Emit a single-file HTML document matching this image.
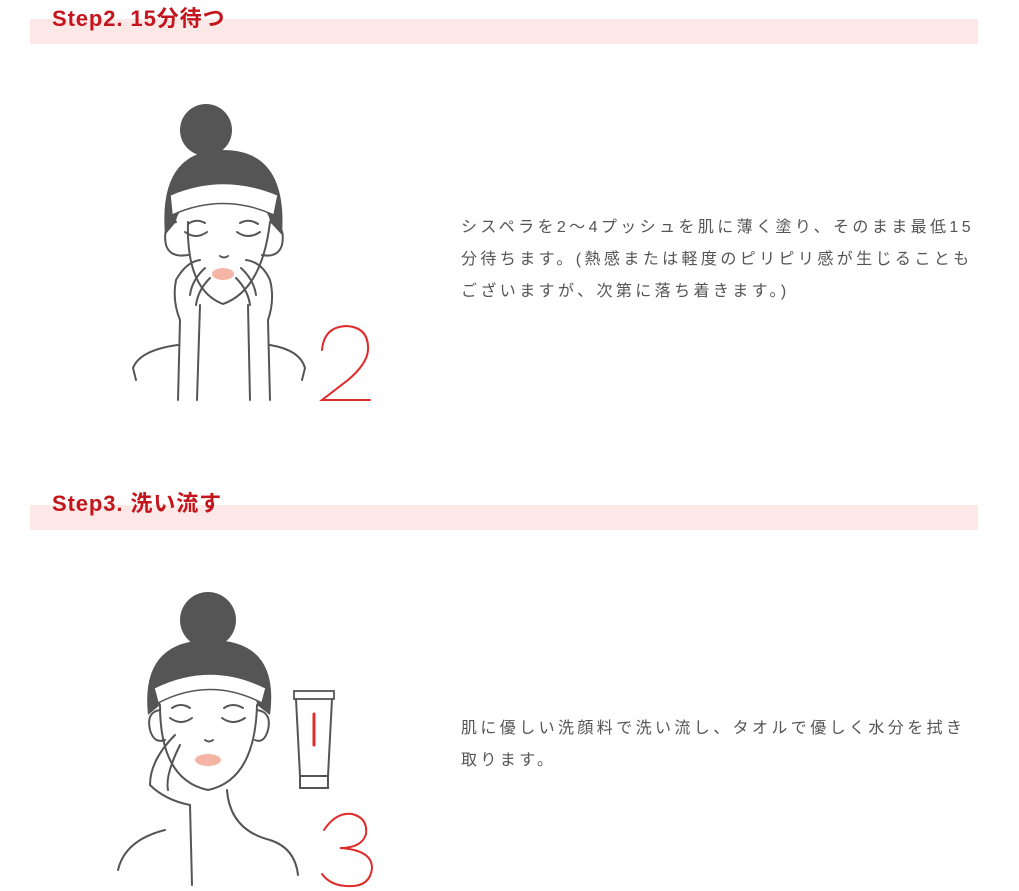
<!DOCTYPE html>
<html><head><meta charset="utf-8"><style>
html,body{margin:0;padding:0;background:#fff;}
body{width:1019px;height:891px;position:relative;overflow:hidden;font-family:"Liberation Sans","Noto Sans CJK JP",sans-serif;}
.bar{position:absolute;left:30px;width:948px;height:25px;background:#fde8e8;}
.ttl{position:absolute;left:52px;font-size:22px;letter-spacing:0.9px;font-weight:bold;color:#c4151c;line-height:26px;white-space:nowrap;}
.txt{position:absolute;left:461px;font-size:16px;letter-spacing:3.4px;color:#555;line-height:32px;white-space:nowrap;}
svg{position:absolute;left:0;top:0;}
</style></head><body>
<div class="bar" style="top:19px"></div>
<div class="ttl" style="top:6px">Step2. 15分待つ</div>
<div class="bar" style="top:505px"></div>
<div class="ttl" style="top:491px">Step3. 洗い流す</div>
<div class="txt" style="top:212px">シスペラを2～4プッシュを肌に薄く塗り、そのまま最低15<br>分待ちます。(熱感または軽度のピリピリ感が生じることも<br>ございますが、次第に落ち着きます。)</div>
<div class="txt" style="top:713px">肌に優しい洗顔料で洗い流し、タオルで優しく水分を拭き<br>取ります。</div>
<svg width="1019" height="891" viewBox="0 0 1019 891" fill="none" stroke="#555" stroke-width="2" stroke-linecap="round">
<circle cx="206" cy="130" r="26" fill="#555" stroke="none"/>
<path d="M165 235 Q158 150 223 150 Q288 150 282 235 L270 222 Q268 200 223 196 Q178 200 176 222 Z" fill="#555" stroke="none"/>
<path d="M170 195 Q223 172 278 195 L274 215 Q223 192 172 215 Z" fill="#fff" stroke="#555" stroke-width="1.5"/>
<path d="M188 222 Q186 290 223 304 Q262 290 270 222"/>
<path d="M176 222 Q162 225 166 245 Q170 258 188 255"/>
<path d="M270 222 Q286 225 282 245 Q278 258 262 255"/>
<path d="M185 232 Q196 240 207 232 M237 232 Q248 240 260 232 M188 224 Q196 218 205 223 M240 223 Q249 218 258 224"/>
<path d="M220 256 Q224 259 228 256"/>
<ellipse cx="223" cy="274" rx="11" ry="6" fill="#f5b5a5" stroke="none"/>
<path d="M200 260 Q186 262 176 280 Q172 300 180 320 L178 400 M205 268 Q192 280 190 295 M210 278 Q198 290 196 305"/>
<path d="M246 260 Q262 262 270 280 Q275 300 268 320 L270 400 M241 268 Q254 280 256 295 M236 278 Q248 290 250 305"/>
<path d="M200 305 L197 400 M248 305 L250 400"/>
<path d="M178 345 Q140 350 133 368 L136 380 M270 345 Q300 350 305 368 L302 380"/>
<path d="M322 350 Q324 327 346 326 Q369 327 368 350 Q367 364 348 380 L322 400 L370 400" stroke="#e02b2b" stroke-width="2"/>
<circle cx="208" cy="620" r="28" fill="#555" stroke="none"/>
<path d="M148 715 Q140 640 210 640 Q280 640 270 715 L257 705 Q255 680 210 677 Q163 680 160 705 Z" fill="#555" stroke="none"/>
<path d="M154 688 Q210 660 266 688 L262 703 Q210 676 158 703 Z" fill="#fff" stroke="#555" stroke-width="1.5"/>
<path d="M160 705 Q160 780 208 790 Q255 780 257 705"/>
<path d="M160 710 Q146 712 150 730 Q154 744 165 740 M257 710 Q272 712 268 730 Q264 744 255 740"/>
<path d="M170 718 Q181 726 192 718 M222 718 Q233 726 245 718 M172 708 Q181 702 190 708 M224 708 Q233 702 243 708"/>
<path d="M205 740 Q209 743 213 740"/>
<ellipse cx="208" cy="760" rx="13" ry="6" fill="#f5b5a5" stroke="none"/>
<path d="M175 735 Q150 760 150 785 Q165 800 190 805 L192 885 M180 745 Q165 775 168 790"/>
<path d="M227 790 Q230 830 270 840 Q295 848 298 875"/>
<path d="M165 830 Q125 840 118 870"/>
<rect x="294" y="691" width="40" height="8" stroke-width="1.8"/>
<path d="M296 699 L300 776 L328 776 L332 699 M300 776 L300 788 L328 788 L328 776"/>
<path d="M314 714 L314 745" stroke="#e02b2b" stroke-width="3"/>
<path d="M324 830 Q336 812 352 814 Q368 818 366 834 Q362 848 340 848 Q372 850 372 868 Q370 888 346 886 Q330 885 322 874" stroke="#e02b2b" stroke-width="2"/>
</svg>
</body></html>
